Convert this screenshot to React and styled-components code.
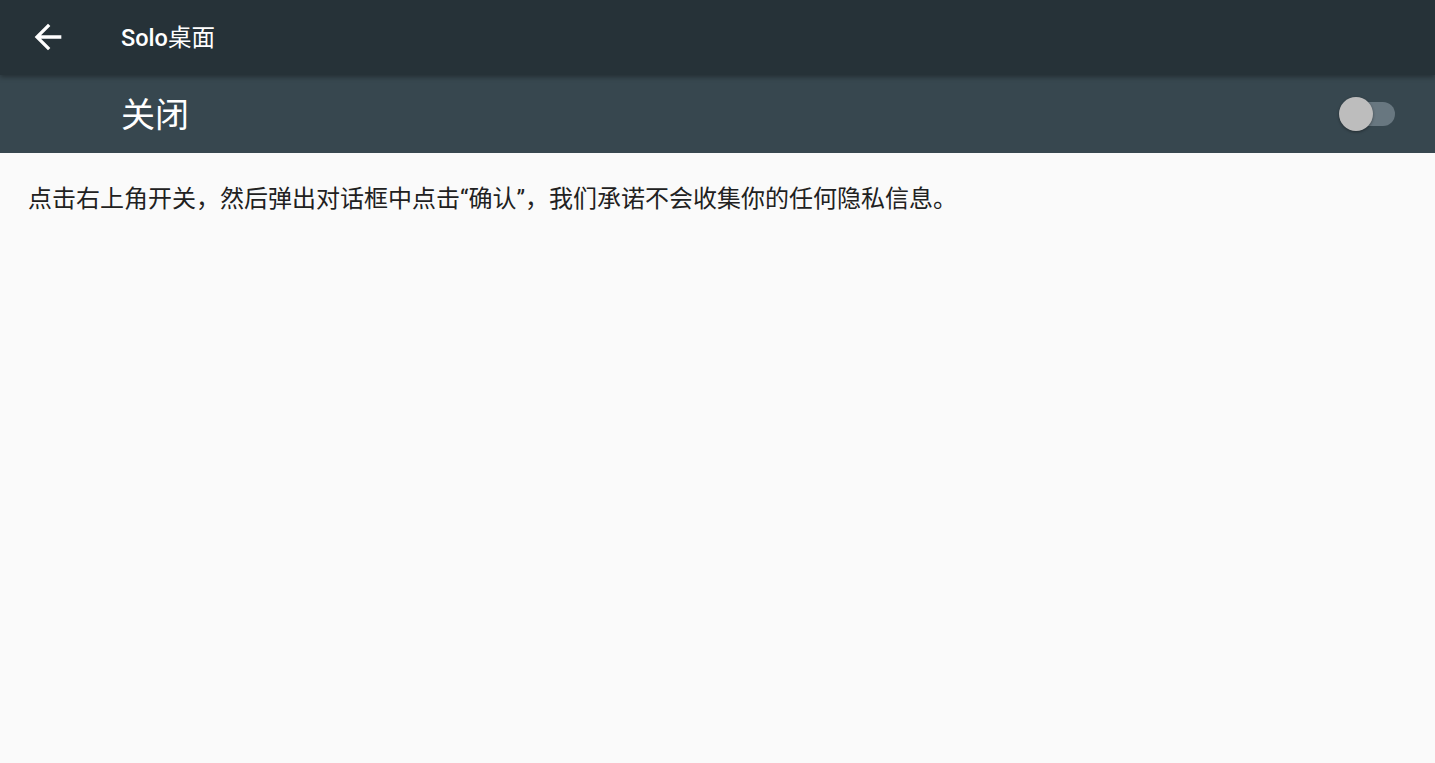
import React, { useState } from "react";
import styled, { createGlobalStyle } from "styled-components";

const GlobalStyle = createGlobalStyle`
  html, body {
    margin: 0;
    padding: 0;
    background: #fafafa;
  }
  body {
    font-family: Roboto, "Noto Sans CJK SC", sans-serif;
  }
`;

const Page = styled.div`
  width: 100%;
  min-height: 763px;
  background: #fafafa;
`;

const Toolbar = styled.header`
  position: relative;
  z-index: 2;
  height: 75px;
  display: flex;
  align-items: center;
  padding-left: 28px;
  background: #263238;
  box-shadow: 0 2px 5px rgba(0, 0, 0, 0.35);
`;

const BackButton = styled.button`
  width: 40px;
  height: 40px;
  padding: 0;
  border: none;
  background: none;
  display: flex;
  align-items: center;
  justify-content: center;
  margin-top: -2px;
  cursor: pointer;
`;

const Title = styled.h1`
  margin: -4px 0 0 53px;
  font-size: 23.5px;
  font-weight: 500;
  color: #ffffff;
  font-family: Roboto, "Noto Sans CJK SC", sans-serif;
`;

const TitleCjk = styled.span`
  font-weight: 400;
`;

const SwitchBar = styled.div`
  height: 78px;
  display: flex;
  align-items: center;
  justify-content: space-between;
  padding: 0 40px 0 121px;
  background: #37474f;
`;

const SwitchLabel = styled.span`
  font-size: 34px;
  color: #ffffff;
  font-family: Roboto, "Noto Sans CJK SC", sans-serif;
  margin-top: -4px;
`;

const Track = styled.div`
  position: relative;
  width: 50px;
  height: 24px;
  border-radius: 12px;
  background: ${(p) => (p.$on ? "#80cbc4" : "#687780")};
  cursor: pointer;
`;

const Thumb = styled.div`
  position: absolute;
  top: -5px;
  left: ${(p) => (p.$on ? "22px" : "-6px")};
  width: 34px;
  height: 34px;
  border-radius: 50%;
  background: ${(p) => (p.$on ? "#009688" : "#bdbdbd")};
  box-shadow: 0 1px 3px rgba(0, 0, 0, 0.4);
`;

const Content = styled.main`
  padding: 29px 28px;
`;

const Hint = styled.p`
  margin: 0;
  font-size: 24px;
  line-height: 34px;
  color: #212121;
  font-family: Roboto, "Noto Sans CJK SC", sans-serif;
`;

const ArrowBack = () => (
  <svg width="40" height="40" viewBox="0 0 24 24" fill="#ffffff">
    <path d="M20 11H7.83l5.59-5.59L12 4l-8 8 8 8 1.41-1.41L7.83 13H20v-2z" />
  </svg>
);

const App = () => {
  const [on, setOn] = useState(false);

  return (
    <Page>
      <GlobalStyle />
      <Toolbar>
        <BackButton aria-label="返回">
          <ArrowBack />
        </BackButton>
        <Title>
          Solo<TitleCjk>桌面</TitleCjk>
        </Title>
      </Toolbar>
      <SwitchBar>
        <SwitchLabel>{on ? "开启" : "关闭"}</SwitchLabel>
        <Track $on={on} onClick={() => setOn(!on)}>
          <Thumb $on={on} />
        </Track>
      </SwitchBar>
      <Content>
        <Hint>
          点击右上角开关，然后弹出对话框中点击“确认”，我们承诺不会收集你的任何隐私信息。
        </Hint>
      </Content>
    </Page>
  );
};

export default App;
